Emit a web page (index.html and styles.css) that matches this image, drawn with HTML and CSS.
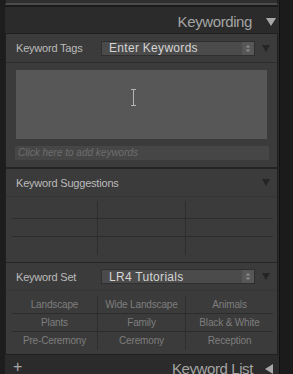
FILE: index.html
```html
<!DOCTYPE html>
<html lang="en">
<head>
    <meta charset="UTF-8">
    <meta name="viewport" content="width=device-width, initial-scale=1.0">
    <title>Keywording</title>
    <link rel="stylesheet" href="styles.css">
</head>
<body>
    <div class="edge-left"></div>
    <div class="sidebar">
        <div class="prev-panel"></div>

        <div class="panel-title">
            <span>Keywording</span>
            <svg class="tri-big" width="10" height="8" viewBox="0 0 10 8"><path d="M0 0H10L5 8Z"/></svg>
        </div>

        <div class="panel">
            <div class="row-head">
                <span class="label">Keyword Tags</span>
                <div class="dropdown">
                    <span>Enter Keywords</span>
                    <svg class="spin" width="12" height="13" viewBox="0 0 12 13"><path d="M3.5 5.5L6 3L8.5 5.5Z M3.5 7.5L6 10L8.5 7.5Z"/></svg>
                </div>
                <svg class="tri" width="8" height="7" viewBox="0 0 8 7"><path d="M0 0H8L4 7Z"/></svg>
            </div>

            <div class="tags-body">
                <div class="tags-area">
                    <svg class="ibeam" width="5" height="17" viewBox="0 0 5 17"><path d="M0 0.5H5M0 16.5H5M2.5 0.5V16.5"/></svg>
                </div>
                <div class="add-input">Click here to add keywords</div>
            </div>

            <div class="row-head sep-thick">
                <span class="label wide">Keyword Suggestions</span>
                <svg class="tri tri-push" width="8" height="7" viewBox="0 0 8 7"><path d="M0 0H8L4 7Z"/></svg>
            </div>

            <div class="grid-wrap suggest">
                <div class="kw-grid">
                    <div></div><div></div><div></div>
                    <div></div><div></div><div></div>
                    <div></div><div></div><div></div>
                </div>
            </div>

            <div class="row-head sep-top">
                <span class="label">Keyword Set</span>
                <div class="dropdown">
                    <span>LR4 Tutorials</span>
                    <svg class="spin" width="12" height="13" viewBox="0 0 12 13"><path d="M3.5 5.5L6 3L8.5 5.5Z M3.5 7.5L6 10L8.5 7.5Z"/></svg>
                </div>
                <svg class="tri" width="8" height="7" viewBox="0 0 8 7"><path d="M0 0H8L4 7Z"/></svg>
            </div>

            <div class="grid-wrap set">
                <div class="kw-grid">
                    <div>Landscape</div><div>Wide Landscape</div><div>Animals</div>
                    <div>Plants</div><div>Family</div><div>Black &amp; White</div>
                    <div>Pre-Ceremony</div><div>Ceremony</div><div>Reception</div>
                </div>
            </div>
        </div>

        <div class="panel-title footer">
            <span class="plus">+</span>
            <span class="footer-name">Keyword List</span>
            <svg class="tri-big" width="8" height="10" viewBox="0 0 8 10"><path d="M8 0V10L0 5Z"/></svg>
        </div>
    </div>
    <div class="edge-right"></div>
</body>
</html>
```

FILE: styles.css
```css
body {
    margin: 0;
    height: 374px;
    overflow: hidden;
    display: flex;
    background: #1c1c1c;
    font-family: "Liberation Sans", Arial, sans-serif;
}
.edge-left {
    width: 5px;
    background: #1d1d1d;
}
.sidebar {
    width: 274px;
    background: #2b2b2b;
    border-right: 1px solid #111;
}
.edge-right {
    flex: 1;
    background: #1b1b1b;
}
.prev-panel {
    height: 3px;
    width: 271px;
    background: #2f2f2f;
    border: 1px solid #1c1c1c;
    border-top: none;
    border-bottom: 2px solid #4b4b4b;
    box-shadow: 0 2px 0 #1a1a1a;
    margin-bottom: 2px;
}
.panel-title {
    height: 26px;
    box-sizing: border-box;
    padding-top: 3px;
    display: flex;
    align-items: center;
    justify-content: flex-end;
    padding-right: 3px;
    color: #a4a4a4;
    font-size: 15px;
    letter-spacing: -0.4px;
}
.tri-big {
    fill: #a8a8a8;
    margin-left: 14px;
}
.panel {
    width: 271px;
    background: #3b3b3b;
    border: 1px solid #1f1f1f;
}
.row-head {
    display: flex;
    align-items: center;
    padding-left: 10px;
    border-bottom: 1px solid #2c2c2c;
    box-sizing: border-box;
    height: 29px;
}
.label {
    width: 85px;
    flex: none;
    color: #bcbcbc;
    font-size: 11px;
    letter-spacing: -0.2px;
    white-space: nowrap;
}
.label.wide {
    width: auto;
}
.sep-thick {
    border-top: 2px solid #232323;
    height: 30px;
    border-bottom: 1px solid #353535;
}
.sep-top {
    border-top: 1px solid #262626;
    height: 29px;
    border-bottom: 1px solid #363636;
}
.dropdown {
    width: 154px;
    height: 15px;
    box-sizing: border-box;
    display: flex;
    align-items: center;
    justify-content: space-between;
    background: #4b4b4b;
    border: 1px solid #2f2f2f;
    padding-left: 7px;
    color: #d4d4d4;
    font-size: 12px;
    letter-spacing: 0.3px;
}
.spin {
    background: #575757;
    fill: #8c8c8c;
}
.tri {
    fill: #252525;
    margin-left: 7px;
}
.tri-push {
    margin-left: auto;
    margin-right: 7px;
}
.tags-body {
    padding: 7px 0;
}
.tags-area {
    width: 251px;
    height: 69px;
    margin-left: 10px;
    background: #575757;
    position: relative;
}
.ibeam {
    position: absolute;
    left: 115px;
    top: 19px;
    stroke: #b4b4b4;
    stroke-width: 1;
    fill: none;
}
.add-input {
    width: 254px;
    height: 14px;
    box-sizing: border-box;
    margin: 7px 0 0 9px;
    padding-left: 3px;
    background: #464646;
    color: #6e6e6e;
    font-size: 10px;
    font-style: italic;
    line-height: 14px;
}
.grid-wrap {
    padding: 4px 0 7px 6px;
}
.grid-wrap.set {
    padding: 5px 0 4px 6px;
}
.kw-grid {
    width: 261px;
    display: grid;
    grid-template-columns: 86px 88px 87px;
    grid-auto-rows: 18px;
}
.kw-grid div {
    border-right: 1px solid #2d2d2d;
    border-bottom: 1px solid #2d2d2d;
    text-align: center;
    color: #7e7e7e;
    font-size: 10px;
    letter-spacing: -0.15px;
    line-height: 18px;
}
.kw-grid div:nth-child(3n) {
    border-right: none;
}
.kw-grid div:nth-child(n+7) {
    border-bottom: none;
}
.footer {
    height: 19px;
    padding-top: 5px;
    align-items: flex-start;
}
.plus {
    margin-right: auto;
    margin-left: 8px;
    font-size: 16px;
    line-height: 14px;
    color: #a8a8a8;
}
.footer-name {
    line-height: 18px;
}
.footer .tri-big {
    margin-top: 4px;
    margin-left: 12px;
    margin-right: 3px;
}
```
